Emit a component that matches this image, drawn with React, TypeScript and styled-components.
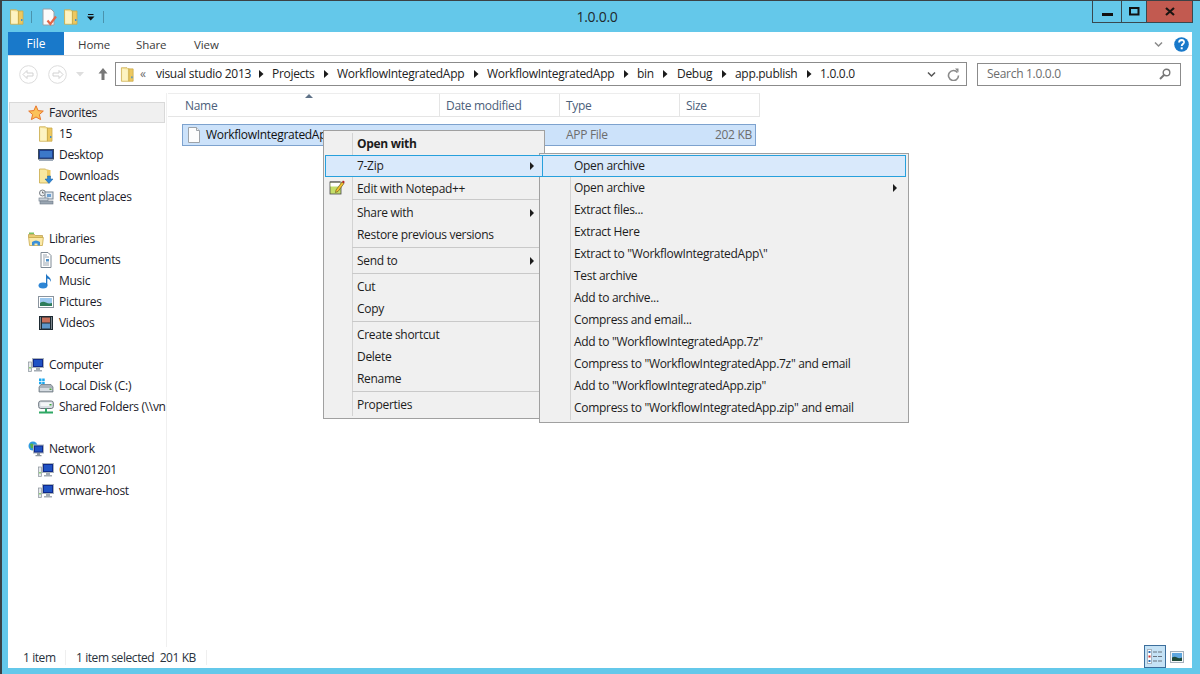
import React from "react";
import styled, { createGlobalStyle } from "styled-components";

const Global = createGlobalStyle`
  html, body { margin: 0; padding: 0; width: 1200px; height: 674px; overflow: hidden; }
  body { font-family: "Open Sans", "Noto Sans", sans-serif; font-size: 12px; color: #1a1a1a; }
  * { box-sizing: border-box; }
`;

const Window = styled.div`
  position: relative; width: 1200px; height: 674px; background: #64c8ea;
  border-top: 1px solid #3b4145; border-left: 2px solid #3b4145;
  display: flex; flex-direction: column; overflow: hidden; letter-spacing: -0.3px;
`;
const TitleBar = styled.div`height: 31px; flex: none; display: flex; align-items: flex-start;`;
const Quick = styled.div`width: 106px; height: 31px; display: flex; align-items: center; flex: none; padding-top: 1px;`;
const QuickSep = styled.div`width: 1px; height: 12px; background: #4a93ad; flex: none;`;
const QuickGap = styled.span<{ $w: number }>`width: ${p => p.$w}px; flex: none;`;
const Title = styled.div`flex: 1; text-align: center; font-size: 14px; line-height: 31px; padding-right: 6px; color: #20282c; letter-spacing: -0.3px;`;
const Caption = styled.div`display: flex; flex: none; margin-right: 7px; height: 22px; border: 1px solid #39484f; border-top: 0;`;
const CapBtn = styled.div<{ $w: number; $close?: boolean }>`
  width: ${p => p.$w}px; display: flex; align-items: center; justify-content: center;
  background: ${p => (p.$close ? "#c25a50" : "transparent")};
  & + & { border-left: 1px solid #39484f; }
`;
const Client = styled.div`
  flex: none; height: 636px; margin-left: 6px; margin-right: 8px; background: #fff;
  display: flex; flex-direction: column;
`;
const Tabs = styled.div`height: 24px; display: flex; flex: none; border-bottom: 1px solid #dadbdc; align-items: stretch; position: relative;`;
const FileTab = styled.div`width: 56px; height: 23px; background: #1979ca; color: #fff; font-size: 12px; display: flex; align-items: center; justify-content: center; letter-spacing: 0;`;
const TabGap = styled.span`width: 14px; flex: none;`;
const Tab = styled.div<{ $w: number }>`width: ${p => p.$w}px; display: flex; align-items: center; font-size: 11.5px; color: #3b3b3b; padding-top: 1px; letter-spacing: -0.1px;`;
const TabSpacer = styled.div`flex: 1;`;
const TabIcons = styled.div`display: flex; align-items: center; gap: 7px; padding-right: 3px; padding-top: 1px;`;
const NavBar = styled.div`height: 37px; flex: none; display: flex; align-items: center; padding-left: 11px; padding-bottom: 1px;`;
const RoundBtn = styled.div<{ $ml?: number }>`width: 19px; height: 19px; flex: none; margin-left: ${p => p.$ml ?? 0}px; display: flex;`;
const Address = styled.div`
  width: 852px; height: 24px; border: 1px solid #8b8b8b; display: flex; align-items: center; margin-left: 7px; padding-left: 4px; flex: none;
`;
const Crumbs = styled.div`flex: 1; display: flex; align-items: center; color: #222; font-size: 12px; white-space: nowrap; padding-bottom: 1px;`;
const Crumb = styled.span<{ $w: number }>`display: inline-block; width: ${p => p.$w}px; flex: none;`;
const CrumbBack = styled.span`display: inline-block; width: 16px; margin-left: 5px; flex: none; color: #6d6d6d;`;
const CrumbArrow = styled.span<{ $w: number }>`display: flex; width: ${p => p.$w}px; flex: none; align-items: center; padding-top: 1px;`;
const Search = styled.div`
  width: 204px; height: 23px; margin-left: 10px; border: 1px solid #8b8b8b; display: flex; align-items: center; justify-content: space-between;
  padding: 0 9px 1px 9px; color: #6d6d6d; font-size: 12px; flex: none;
`;
const Body = styled.div`flex: 1; display: flex; min-height: 0;`;
const NavPane = styled.div`width: 159px; margin-right: 1px; flex: none; padding: 9px 0 0 1px; border-right: 1px solid #f0f0f0; overflow: hidden;`;
const NavRow = styled.div<{ $child?: boolean; $hover?: boolean }>`
  height: 21px; display: flex; align-items: center; white-space: nowrap; overflow: hidden; color: #1b1b2a;
  padding-left: ${p => (p.$child ? 29 : 19)}px; gap: 5px;
  ${p => p.$hover ? "background: #f0f0f0; outline: 1px solid #d9d9d9; outline-offset: -1px; width: 156px; height: 21px;" : ""}
`;
const Content = styled.div`flex: 1; min-width: 0; position: relative; display: flex; flex-direction: column;`;
const Header = styled.div`
  width: 592px; height: 24px; display: flex; border-top: 1px solid #ededed; border-bottom: 1px solid #e5e5e5; border-right: 1px solid #e5e5e5; color: #4c607a; flex: none;
`;
const HeaderCell = styled.div<{ $w: number; $pl?: number }>`
  width: ${p => p.$w}px; flex: none; padding-left: ${p => p.$pl ?? 6}px; display: flex; align-items: center; border-right: 1px solid #e5e5e5; position: relative;
  &:last-child { border-right: 0; }
`;
const SortArrow = styled.div`
  position: absolute; left: 137px; top: 0; width: 0; height: 0;
  border-left: 4px solid transparent; border-right: 4px solid transparent; border-bottom: 4px solid #5f7288;
`;
const FileRow = styled.div`
  margin: 7px 0 0 14px; width: 574px; height: 22px; background: #cce2fa; border: 1px solid #7da2ce; display: flex; align-items: center; padding-left: 4px; flex: none; position: relative;
`;
const FileName = styled.span`margin: 0 0 2px 5px; width: 360px; color: #111;`;
const FileType = styled.span`margin-bottom: 2px; width: 120px; color: #6d6d6d;`;
const FileSize = styled.span`margin-bottom: 2px; width: 66px; text-align: right; color: #6d6d6d;`;
const Status = styled.div`height: 21px; flex: none; display: flex; align-items: center; position: relative; color: #28323c; padding-left: 15px;`;
const StatusCell = styled.span<{ $w: number }>`width: ${p => p.$w}px; flex: none; white-space: pre; letter-spacing: -0.42px;`;
const StatusSep = styled.span`width: 1px; height: 15px; background: #efefef; flex: none; margin-right: 10px;`;
const Views = styled.div`position: absolute; right: 8px; bottom: 0; display: flex; align-items: center; gap: 4px;`;
const ViewBtn = styled.div<{ $on?: boolean }>`
  width: ${p => (p.$on ? 22 : 14)}px; height: 23px; display: flex; align-items: center; justify-content: center;
  ${p => p.$on ? "background: #c5e2f5; border: 1px solid #3c6e9c;" : ""}
`;
const Menu = styled.div<{ $x: number; $y: number; $w: number; $gutter: number; $h: number; $pad: string }>`
  position: absolute; left: ${p => p.$x}px; top: ${p => p.$y}px; width: ${p => p.$w}px; height: ${p => p.$h}px;
  background: #f0f0f0; border: 1px solid #a0a0a0; padding: ${p => p.$pad}; color: #1c1c1c;
  &::before { content: ""; position: absolute; left: ${p => p.$gutter}px; top: 2px; bottom: 2px; width: 1px; background: #d3d3d3; }
`;
const Item = styled.div<{ $active?: boolean; $bold?: boolean }>`
  position: relative; height: 22px; display: flex; align-items: center; padding: 0 0 1px 32px; white-space: nowrap;
  font-weight: ${p => (p.$bold ? 700 : 400)};
  ${p => p.$active ? "background: #d9e9fb; outline: 1px solid #27a0dc; outline-offset: -1px; z-index: 1;" : ""}
`;
const LowItem = styled(Item)`padding: 1px 0 0 32px;`;
const MenuIcon = styled.span`position: absolute; left: 4px; top: 2px; display: flex;`;
const SubArrow = styled.span`
  position: absolute; right: 9px; top: 7px; width: 0; height: 0;
  border-top: 4px solid transparent; border-bottom: 4px solid transparent; border-left: 4px solid #1c1c1c;
`;
const Sep = styled.div<{ $h?: number; $top?: number }>`
  height: ${p => p.$h ?? 4}px; position: relative;
  &::after { content: ""; position: absolute; left: 27px; right: 0; top: ${p => p.$top ?? 1}px; height: 1px; background: #c9c9c9; }
`;

const Folder = ({ s = 16 }: { s?: number }) => (
  <svg width={s} height={s} viewBox="0 0 16 16" style={{ flex: "none" }}>
    <path d="M1.500.8h6l1 1h1v13.400h-8z" fill="#f7e7a0" stroke="#c9a94a" strokeWidth=".8" />
    <path d="M2.300 1.800l6 1.200v11.500h-6z" fill="#fdf3c2" />
    <path d="M9.500 2h4.500v13.200H9.500z" fill="#edc860" stroke="#c9a94a" strokeWidth=".8" />
    <rect x="12" y="10" width="1.400" height="2" fill="#3f8fd0" />
  </svg>
);
const Star = () => (
  <svg width="16" height="16" viewBox="0 0 16 16" style={{ flex: "none" }}>
    <path d="M8 .8l2.100 4.800 5.200.5-3.900 3.400 1.200 5.100L8 12l-4.600 2.600 1.200-5.100L.7 6.100l5.200-.5z" fill="#fbc25a" stroke="#e8752a" strokeWidth="1" />
  </svg>
);
const Desktop = () => (
  <svg width="16" height="16" viewBox="0 0 16 16" style={{ flex: "none" }}>
    <rect x=".5" y="2.500" width="15" height="9.500" fill="#1f3f8f" stroke="#3a4a5c" />
    <rect x="2" y="4" width="12" height="6.500" fill="#3c78c8" />
    <rect x="1" y="12.500" width="14" height="1.500" fill="#a0acba" />
  </svg>
);
const Downloads = () => (
  <svg width="16" height="16" viewBox="0 0 16 16" style={{ flex: "none" }}>
    <path d="M1.500 1h6l1 1h2v13h-9z" fill="#f7e7a0" stroke="#c9a94a" strokeWidth=".8" />
    <path d="M9 2h3.500v7H9z" fill="#edc860" />
    <path d="M9.500 8h3v3h2.500l-4 4.500-4-4.500h2.500z" fill="#2e86d6" stroke="#155d9f" strokeWidth=".5" />
  </svg>
);
const Recent = () => (
  <svg width="16" height="16" viewBox="0 0 16 16" style={{ flex: "none" }}>
    <circle cx="4.500" cy="4" r="3" fill="#eef0f2" stroke="#7a7f85" />
    <path d="M4.500 2.500V4h1.500" stroke="#444" fill="none" strokeWidth=".7" />
    <rect x="7" y="3" width="8" height="7" fill="#dfe8f0" stroke="#7a8794" />
    <rect x="9" y="5" width="4" height="3" fill="#6ea0d0" />
    <rect x="1" y="9" width="9" height="3" fill="#c8d0d8" stroke="#7a8794" strokeWidth=".7" />
    <rect x="2" y="12" width="13" height="3" fill="#9aa6b2" stroke="#6a7682" strokeWidth=".6" />
  </svg>
);
const Libraries = () => (
  <svg width="16" height="16" viewBox="0 0 16 16" style={{ flex: "none" }}>
    <path d="M.5 3.500h6l1 1h7v2h-14z" fill="#e8cc70" stroke="#b89a45" strokeWidth=".7" />
    <rect x="1" y="1.500" width="5" height="1.500" fill="#7ac060" />
    <path d="M.6 6.500h14.800l-1 8H1.600z" fill="#fbe9a8" stroke="#c9a94a" strokeWidth=".8" />
    <path d="M4 14.500v-3.500q4-3 8 0v3.500h-2.500v-2h-3v2z" fill="#3a8fd8" />
  </svg>
);
const Doc = () => (
  <svg width="16" height="16" viewBox="0 0 16 16" style={{ flex: "none" }}>
    <path d="M3 .5h7l3 3v12H3z" fill="#fff" stroke="#7f8a95" />
    <path d="M5 3h4M5 5h6M5 11h6M5 13h6" stroke="#9aa5b0" />
    <rect x="8" y="7" width="3" height="2.500" fill="#4b8fc8" />
    <path d="M5 7h2M5 9h2" stroke="#9aa5b0" />
  </svg>
);
const Music = () => (
  <svg width="16" height="16" viewBox="0 0 16 16" style={{ flex: "none" }}>
    <ellipse cx="5" cy="12.500" rx="4.500" ry="3" fill="#2e86d6" />
    <path d="M8 12.500V.5c1 3 5.500 3.500 5 8.500-.6-2.500-3-3.500-3.700-3.500v7z" fill="#2176c5" />
  </svg>
);
const Pictures = () => (
  <svg width="16" height="16" viewBox="0 0 16 16" style={{ flex: "none" }}>
    <rect x=".5" y="2.500" width="15" height="11" fill="#fff" stroke="#8a949e" />
    <rect x="2" y="4" width="12" height="8" fill="#9cc8ee" />
    <path d="M2 12V9q3-2 6-.5t6 .5v3z" fill="#2e7d5a" />
  </svg>
);
const Videos = () => (
  <svg width="16" height="16" viewBox="0 0 16 16" style={{ flex: "none" }}>
    <rect x="1" y="1" width="14" height="14" fill="#1e2a32" />
    <rect x="4" y="2.500" width="8" height="5" fill="#c8705a" />
    <rect x="4" y="8.500" width="8" height="5" fill="#5f97c9" />
    <path d="M2 3h1M2 5h1M2 7h1M2 9h1M2 11h1M2 13h1M13 3h1M13 5h1M13 7h1M13 9h1M13 11h1M13 13h1" stroke="#dfe6ec" />
  </svg>
);
const Computer = () => (
  <svg width="16" height="16" viewBox="0 0 16 16" style={{ flex: "none" }}>
    <rect x=".5" y="5" width="3" height="9.500" fill="#e6e9ec" stroke="#89929a" strokeWidth=".7" />
    <rect x="1.300" y="10" width="1.400" height="1.500" fill="#69c24a" />
    <rect x="4.500" y="1.500" width="11" height="9" fill="#10298a" stroke="#aab3bb" />
    <rect x="6" y="3" width="8" height="6" fill="#1f52c4" />
    <path d="M8 11h4v2h2v1.500H6V13h2z" fill="#a4acb4" />
  </svg>
);
const Disk = () => (
  <svg width="16" height="16" viewBox="0 0 16 16" style={{ flex: "none" }}>
    <path d="M1 .5h2.500V3H1zM4.200.5h2.500V3H4.200zM1 3.700h2.500v2.500H1zM4.200 3.700h2.500v2.500H4.200z" fill="#19a7ef" />
    <path d="M1 9l2-2.500h10L15 9v5H1z" fill="#a9b2ba" stroke="#66707a" strokeWidth=".7" />
    <rect x="2" y="10" width="12" height="3" fill="#d6dce2" />
    <rect x="11.500" y="10.500" width="2" height="1.500" fill="#4aa83c" />
  </svg>
);
const Shared = () => (
  <svg width="16" height="16" viewBox="0 0 16 16" style={{ flex: "none" }}>
    <rect x=".7" y="2" width="14.600" height="7.500" rx="2" fill="#d7dde2" stroke="#6c767f" />
    <rect x="2.500" y="3.500" width="11" height="3.500" fill="#f3f5f7" />
    <rect x="11.500" y="5" width="2" height="1.500" fill="#3ca83c" />
    <path d="M8 9.500v3M1 13.500h14" stroke="#2fa865" strokeWidth="2" />
  </svg>
);
const Network = () => (
  <svg width="16" height="16" viewBox="0 0 16 16" style={{ flex: "none" }}>
    <circle cx="5" cy="5" r="4.500" fill="#2e9be0" />
    <path d="M2 3q2-1 3 0t2 1-1 2-3 1z" fill="#58b04a" />
    <rect x="5.500" y="4" width="10" height="8" fill="#10298a" stroke="#aab3bb" />
    <rect x="7" y="5.500" width="7" height="5" fill="#1f52c4" />
    <path d="M9 12h3v2h1.500v1.300h-6V14H9z" fill="#8f98a0" />
  </svg>
);
const FileGlyph = () => (
  <svg width="14" height="16" viewBox="0 0 14 16" style={{ flex: "none" }}>
    <path d="M1.500.5h8l3 3v12h-11z" fill="#fdfdfd" stroke="#9da3a9" />
    <path d="M9.500.5v3h3" fill="#eceef0" stroke="#9da3a9" />
  </svg>
);
const Notepad = () => (
  <svg width="16" height="16" viewBox="0 0 16 16">
    <rect x="1" y="3" width="11" height="12" fill="#c4de68" stroke="#4a4a4a" strokeWidth=".8" />
    <rect x="1.500" y="3.500" width="10" height="4" fill="#fff" />
    <path d="M2 2v2M4 2v2M6 2v2M8 2v2M10 2v2" stroke="#555" />
    <path d="M7 11l6-8 2 1.500-6 8-2.500 1z" fill="#f2c230" stroke="#5a4a1a" strokeWidth=".6" />
    <path d="M13 3l1-1.500 1.700 1.200-.7 1.800z" fill="#b02020" />
  </svg>
);
const QuickDoc = () => (
  <svg width="16" height="18" viewBox="0 0 16 18" style={{ flex: "none" }}>
    <path d="M1 1h8l3 3v13H1z" fill="#fbfbfb" stroke="#9aa0a6" />
    <path d="M5.500 12.500l2.800 3.500 5.700-7.500" fill="none" stroke="#e2674a" strokeWidth="2.200" />
  </svg>
);
const Chevron = ({ c = "#6d6d6d" }: { c?: string }) => (
  <svg width="9" height="7" viewBox="0 0 9 7" style={{ flex: "none" }}>
    <path d="M1 1.500l3.500 3.500L8 1.500" fill="none" stroke={c} strokeWidth="1.500" />
  </svg>
);
const Round = ({ d }: { d: string }) => (
  <svg width="19" height="19" viewBox="0 0 19 19">
    <circle cx="9.500" cy="9.500" r="8.800" fill="#fff" stroke="#dcdcdc" />
    <path d={d} fill="#fff" stroke="#d2d2d2" />
  </svg>
);
const CrumbTri = () => (
  <svg width="5" height="8" viewBox="0 0 5 8"><path d="M0 0l4.500 4L0 8z" fill="#1a1a1a" /></svg>
);

const navItems: { t?: string; child?: boolean; hover?: boolean; I?: React.FC }[] = [
  { t: "Favorites", I: Star, hover: true },
  { t: "15", child: true, I: () => <Folder /> },
  { t: "Desktop", child: true, I: Desktop },
  { t: "Downloads", child: true, I: Downloads },
  { t: "Recent places", child: true, I: Recent },
  {},
  { t: "Libraries", I: Libraries },
  { t: "Documents", child: true, I: Doc },
  { t: "Music", child: true, I: Music },
  { t: "Pictures", child: true, I: Pictures },
  { t: "Videos", child: true, I: Videos },
  {},
  { t: "Computer", I: Computer },
  { t: "Local Disk (C:)", child: true, I: Disk },
  { t: "Shared Folders (\\\\vn", child: true, I: Shared },
  {},
  { t: "Network", I: Network },
  { t: "CON01201", child: true, I: Computer },
  { t: "vmware-host", child: true, I: Computer },
];

const subItems = [
  "Extract files...", "Extract Here", 'Extract to "WorkflowIntegratedApp\\"', "Test archive",
  "Add to archive...", "Compress and email...", 'Add to "WorkflowIntegratedApp.7z"',
  'Compress to "WorkflowIntegratedApp.7z" and email', 'Add to "WorkflowIntegratedApp.zip"',
  'Compress to "WorkflowIntegratedApp.zip" and email',
];

const crumbs: [string, number, number][] = [
  ["visual studio 2013", 103, 13], ["Projects", 52, 13], ["WorkflowIntegratedApp", 137, 13],
  ["WorkflowIntegratedApp", 137, 13], ["bin", 26, 14], ["Debug", 45, 13], ["app.publish", 72, 13],
];

export default function App() {
  return (
    <>
      <Global />
      <Window>
        <TitleBar>
          <Quick>
            <QuickGap $w={7} />
            <Folder />
            <QuickGap $w={6} />
            <QuickSep />
            <QuickGap $w={10} />
            <QuickDoc />
            <QuickGap $w={5} />
            <Folder />
            <QuickGap $w={8} />
            <svg width="8" height="7" viewBox="0 0 8 7" style={{ flex: "none" }}><path d="M1 0h5.500v1H1zM0 2.500h7.500L3.700 6.500z" fill="#111" /></svg>
            <QuickGap $w={8} />
            <QuickSep />
          </Quick>
          <Title>1.0.0.0</Title>
          <Caption>
            <CapBtn $w={28}><svg width="11" height="4" style={{ marginTop: 7 }}><rect width="11" height="3" fill="#111" /></svg></CapBtn>
            <CapBtn $w={25}><svg width="11" height="9"><rect x="1" y="1" width="8.500" height="6.500" fill="none" stroke="#111" strokeWidth="2" /></svg></CapBtn>
            <CapBtn $w={46} $close><svg width="10" height="9" viewBox="0 0 10 9"><path d="M1 1l8 7M9 1L1 8" stroke="#1a1512" strokeWidth="2.200" /></svg></CapBtn>
          </Caption>
        </TitleBar>
        <Client>
          <Tabs>
            <FileTab>File</FileTab>
            <TabGap />
            <Tab $w={58}>Home</Tab>
            <Tab $w={58}>Share</Tab>
            <Tab $w={50}>View</Tab>
            <TabSpacer />
            <TabIcons>
              <Chevron c="#8a8a8a" />
              <svg width="15" height="15" viewBox="0 0 15 15" style={{ marginLeft: 4 }}><circle cx="7.500" cy="7.500" r="7.300" fill="#1979ca" /><path d="M5 5.500q.3-2.500 2.700-2.500 2.500.2 2.300 2.400c-.2 1.500-2.300 1.800-2.300 3.600" fill="none" stroke="#fff" strokeWidth="1.800" /><rect x="6.700" y="10.300" width="2" height="2" fill="#fff" /></svg>
            </TabIcons>
          </Tabs>
          <NavBar>
            <RoundBtn><Round d="M4 9.500l4-4v2.500h6v3H8v2.500z" /></RoundBtn>
            <RoundBtn $ml={10}><Round d="M15 9.500l-4-4v2.500H5v3h6v2.500z" /></RoundBtn>
            <svg width="8" height="5" style={{ marginLeft: 9, flex: "none" }}><path d="M0 0h8L4 4.500z" fill="#dedede" /></svg>
            <svg width="10" height="12" viewBox="0 0 10 12" style={{ marginLeft: 14, flex: "none" }}><path d="M5 0l4.500 5.500H6.500V12h-3V5.500H.5z" fill="#777" /></svg>
            <Address>
              <Folder s={15} />
              <Crumbs>
                <CrumbBack>«</CrumbBack>
                {crumbs.map(([t, w, g], i) => (
                  <React.Fragment key={i}>
                    <Crumb $w={w}>{t}</Crumb>
                    <CrumbArrow $w={g}><CrumbTri /></CrumbArrow>
                  </React.Fragment>
                ))}
                <span>1.0.0.0</span>
              </Crumbs>
              <Chevron c="#555" />
              <svg width="13" height="13" viewBox="0 0 13 13" style={{ margin: "0 6px 0 11px", flex: "none" }}><path d="M10.500 4.500A5 5 0 1 0 11.500 7.500" fill="none" stroke="#8a8a8a" strokeWidth="1.600" /><path d="M8 .5l3.500 0v4z" fill="#8a8a8a" /></svg>
            </Address>
            <Search>
              <span>Search 1.0.0.0</span>
              <svg width="12" height="12" viewBox="0 0 12 12"><circle cx="7.500" cy="4.500" r="3.300" fill="none" stroke="#777" strokeWidth="1.400" /><path d="M5 7L1 11" stroke="#777" strokeWidth="2" /></svg>
            </Search>
          </NavBar>
          <Body>
            <NavPane>
              {navItems.map((n, i) => (
                <NavRow key={i} $child={n.child} $hover={n.hover}>
                  {n.I ? <n.I /> : null}
                  {n.t ? <span>{n.t}</span> : null}
                </NavRow>
              ))}
            </NavPane>
            <Content>
              <Header>
                <HeaderCell $w={272} $pl={17}>Name<SortArrow /></HeaderCell>
                <HeaderCell $w={120}>Date modified</HeaderCell>
                <HeaderCell $w={120}>Type</HeaderCell>
                <HeaderCell $w={79}>Size</HeaderCell>
              </Header>
              <FileRow>
                <FileGlyph />
                <FileName>WorkflowIntegratedApp</FileName>
                <FileType>APP File</FileType>
                <FileSize>202 KB</FileSize>
              </FileRow>
            </Content>
          </Body>
          <Status>
            <StatusCell $w={42}>1 item</StatusCell>
            <StatusSep />
            <StatusCell $w={130}>1 item selected  201 KB</StatusCell>
            <StatusSep />
            <Views>
              <ViewBtn $on>
                <svg width="16" height="15" viewBox="0 0 16 15">
                  <rect x=".5" y=".5" width="4" height="14" fill="#fff" stroke="#a8b4c0" />
                  <rect x="1.500" y="2" width="2" height="2" fill="#2a6fb8" /><rect x="1.500" y="6.500" width="2" height="2" fill="#d03030" /><rect x="1.500" y="11" width="2" height="2" fill="#2a6fb8" />
                  <path d="M6 3h4M11 3h4M6 7.500h4M11 7.500h4M6 12h4M11 12h4" stroke="#6a7480" strokeWidth="1.200" />
                </svg>
              </ViewBtn>
              <ViewBtn>
                <svg width="14" height="12" viewBox="0 0 14 12">
                  <rect x=".5" y=".5" width="13" height="11" fill="#f5f7f9" stroke="#a4b0bc" />
                  <rect x="2" y="2" width="10" height="8" fill="#5ea6df" />
                  <path d="M2 10V6.500q3-1.500 5 0t5 0V10z" fill="#1f4a3a" />
                </svg>
              </ViewBtn>
            </Views>
          </Status>
        </Client>
        <Menu $x={321} $y={129} $w={222} $h={289} $gutter={28} $pad="2px 1px 2px 1px">
          <Item $bold>Open with</Item>
          <Item $active>7-Zip<SubArrow /></Item>
          <LowItem><MenuIcon><Notepad /></MenuIcon>Edit with Notepad++</LowItem>
          <Sep $h={3} $top={0} />
          <Item>Share with<SubArrow /></Item>
          <Item>Restore previous versions</Item>
          <Sep />
          <Item>Send to<SubArrow /></Item>
          <Sep />
          <Item>Cut</Item>
          <Item>Copy</Item>
          <Sep />
          <Item>Create shortcut</Item>
          <Item>Delete</Item>
          <Item>Rename</Item>
          <Sep />
          <Item>Properties</Item>
        </Menu>
        <Menu $x={537} $y={152} $w={370} $h={270} $gutter={30} $pad="1px 2px 2px 2px">
          <Item $active>Open archive</Item>
          <Item>Open archive<SubArrow /></Item>
          {subItems.map(t => <Item key={t}>{t}</Item>)}
        </Menu>
      </Window>
    </>
  );
}
